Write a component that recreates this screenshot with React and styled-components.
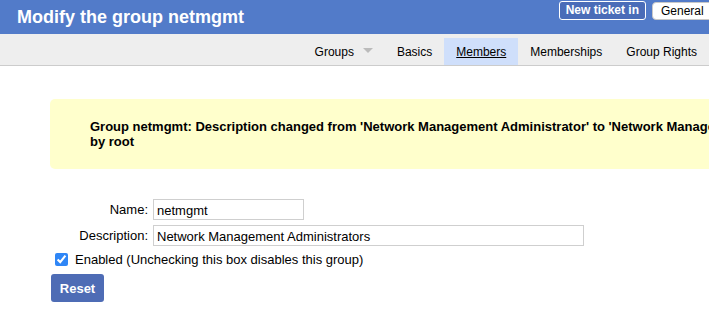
import React from "react";
import styled, { createGlobalStyle } from "styled-components";

const GlobalStyle = createGlobalStyle`
  html, body {
    margin: 0;
    padding: 0;
    overflow: hidden;
    background: #ffffff;
    font-family: "Liberation Sans", Arial, sans-serif;
    font-size: 13px;
    color: #000;
  }
`;

const tabs = [
  { label: "Groups", menu: true },
  { label: "Basics" },
  { label: "Members", current: true },
  { label: "Memberships" },
  { label: "Group Rights" },
];

const App = () => {
  return (
    <Page>
      <GlobalStyle />
      <Header>
        <Title>Modify the group netmgmt</Title>
        <HeaderTools>
          <TicketButton>New ticket in</TicketButton>
          <QueueSelect>General</QueueSelect>
        </HeaderTools>
      </Header>
      <Nav>
        {tabs.map((t) => (
          <Tab key={t.label} $current={t.current}>
            {t.label}
            {t.menu && <Caret />}
          </Tab>
        ))}
      </Nav>
      <Main>
        <Message>
          Group netmgmt: Description changed from 'Network Management
          Administrator' to 'Network Management Administrators'
          <br />
          by root
        </Message>
        <Form>
          <Label>Name:</Label>
          <Input defaultValue="netmgmt" $width={151} />
          <Label>Description:</Label>
          <Input defaultValue="Network Management Administrators" $width={431} />
        </Form>
        <CheckRow>
          <Check type="checkbox" defaultChecked />
          Enabled (Unchecking this box disables this group)
        </CheckRow>
        <ResetButton>Reset</ResetButton>
      </Main>
    </Page>
  );
};
export default App;

const Page = styled.div`
  width: 709px;
  height: 320px;
  overflow: hidden;
`;
const Header = styled.div`
  height: 34px;
  background-color: #527bc9;
  display: flex;
  justify-content: space-between;
  align-items: flex-start;
  padding-left: 17px;
`;
const Title = styled.h1`
  margin: 0;
  font-size: 18px;
  line-height: 34px;
  font-weight: bold;
  color: #ffffff;
`;
const HeaderTools = styled.div`
  display: flex;
  align-items: flex-start;
  gap: 6px;
  padding-top: 1px;
  margin-right: -11px;
`;
const TicketButton = styled.div`
  height: 17px;
  padding: 0 6px;
  border: 1px solid #ffffff;
  border-radius: 3px;
  background-color: #4a6cb8;
  color: #ffffff;
  font-weight: bold;
  font-size: 12px;
  line-height: 17px;
  white-space: nowrap;
`;
const QueueSelect = styled.div`
  height: 16px;
  width: 58px;
  padding-left: 8px;
  margin-top: 1px;
  border: 1px solid #c8c8c8;
  border-radius: 4px 0 0 4px;
  background-color: #ffffff;
  font-size: 12px;
  line-height: 16px;
`;
const Nav = styled.div`
  height: 27px;
  padding-top: 4px;
  background-color: #eeeeee;
  border-bottom: 1px solid #cccccc;
  display: flex;
  justify-content: flex-end;
  padding-right: 0;
`;
const Tab = styled.div`
  display: flex;
  align-items: center;
  padding: 0 12px 0 12px;
  font-size: 12px;
  color: #000;
  background-color: ${(p) => (p.$current ? "#cfdffb" : "transparent")};
  text-decoration: ${(p) => (p.$current ? "underline" : "none")};
`;
const Caret = styled.span`
  width: 0;
  height: 0;
  margin-left: 9px;
  margin-right: 0;
  border-left: 5px solid transparent;
  border-right: 5px solid transparent;
  border-top: 5px solid #bbbbbb;
  margin-top: -2px;
`;
const Main = styled.div`
  padding: 33px 0 0 50px;
`;
const Message = styled.div`
  width: 760px;
  padding: 20px 40px 20px;
  background-color: #ffffcc;
  border-radius: 5px;
  font-weight: bold;
  font-size: 13px;
  line-height: 15px;
  white-space: nowrap;
`;
const Form = styled.div`
  display: grid;
  grid-template-columns: 98px auto;
  column-gap: 5px;
  row-gap: 5px;
  margin-top: 30px;
  justify-content: start;
  align-items: center;
`;
const Label = styled.div`
  text-align: right;
  font-size: 13px;
`;
const Input = styled.input`
  box-sizing: border-box;
  width: ${(p) => p.$width}px;
  height: 21px;
  border: 1px solid #cfcfcf;
  padding: 1px 3px 0;
  font-family: "Liberation Sans", Arial, sans-serif;
  font-size: 13px;
  color: #000;
  outline: none;
`;
const CheckRow = styled.label`
  display: flex;
  align-items: center;
  gap: 7px;
  margin-top: 6px;
  padding-left: 5px;
  font-size: 13px;
`;
const Check = styled.input`
  margin: 0;
  width: 13px;
  height: 13px;
  accent-color: #2f86f6;
`;
const ResetButton = styled.button`
  margin-top: 7px;
  margin-left: 1px;
  width: 53px;
  height: 28px;
  border: none;
  border-radius: 3px;
  background-color: #4e6cb5;
  color: #ffffff;
  font-family: "Liberation Sans", Arial, sans-serif;
  font-weight: bold;
  font-size: 13px;
`;
